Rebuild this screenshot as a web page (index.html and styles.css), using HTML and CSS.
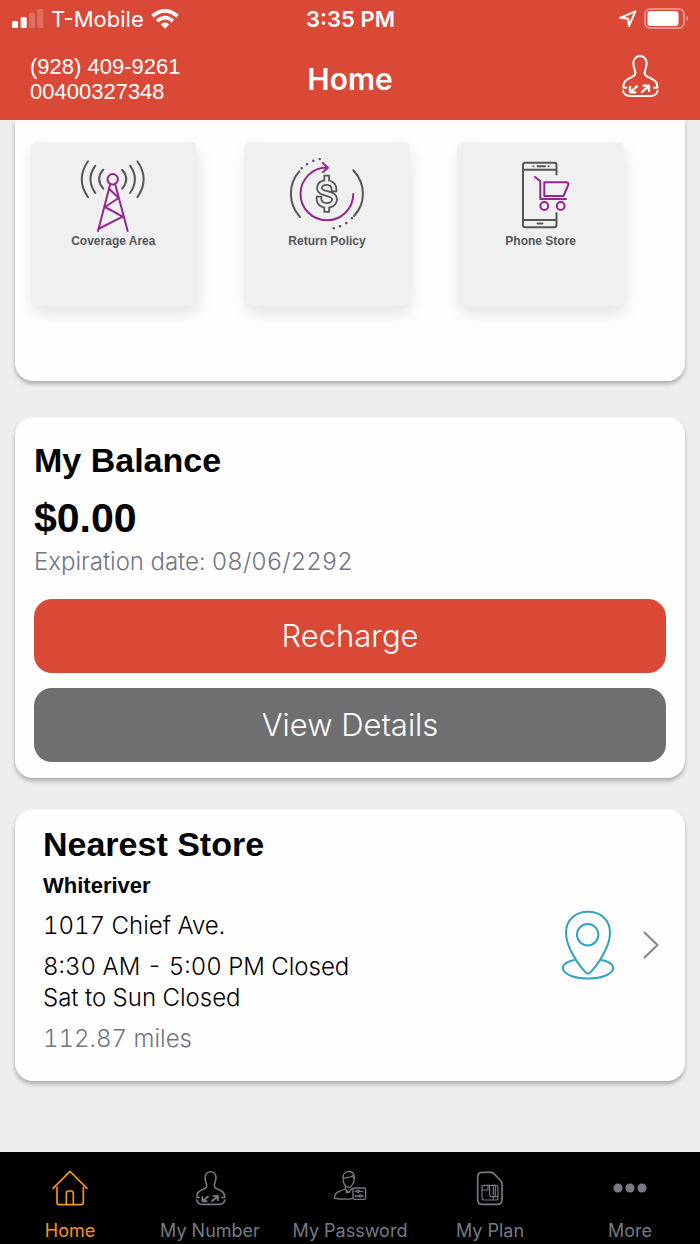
FILE: index.html
```html
<!DOCTYPE html>
<html lang="en">
<head>
<meta charset="utf-8">
<meta name="viewport" content="width=device-width, initial-scale=1">
<title>Home</title>
<link rel="stylesheet" href="styles.css">
</head>
<body>
<header class="header">
  <div class="status">
    <div class="carrier">
      <svg width="32" height="20" viewBox="12 9 32 20" fill="#fff" aria-hidden="true"><rect x="12" y="21" width="6" height="7" rx="1.5"/><rect x="20.700" y="17" width="6" height="11" rx="1.500"/><g opacity=".2"><rect x="29" y="12.500" width="6" height="15.500" rx="1.500"/><rect x="37.300" y="9" width="6" height="19" rx="1.500"/></g></svg>
      <span>T-Mobile</span>
      <svg width="28" height="20" viewBox="0 0 28 20" fill="none" stroke="#fff" stroke-width="3.800" aria-hidden="true"><path d="M1.500 7.200Q14-3.400 26.500 7.200"/><path d="M6 12Q14 5.200 22 12"/><path d="M14 19.800l-4.400-4.500q4.400-3.400 8.800 0z" fill="#fff" stroke="none"/></svg>
    </div>
    <div class="clock">3:35 PM</div>
    <div class="indicators">
      <svg width="18" height="18" viewBox="0 0 18 18" fill="none" stroke="#fff" stroke-width="2" stroke-linejoin="round" aria-hidden="true"><path d="M1.200 7.800L16.400 1.300L9.900 16L9.200 8.800Z"/></svg>
      <svg width="45" height="22" viewBox="0 0 45 22" aria-hidden="true"><rect x="1" y="1" width="39" height="19" rx="5" fill="none" stroke="#fff" stroke-width="1.500" opacity=".5"/><rect x="3.500" y="3" width="31" height="15" rx="3" fill="#fff"/><path d="M42.500 7.500q3 3 0 6z" fill="#fff" opacity=".5"/></svg>
    </div>
  </div>
  <div class="nav">
    <div class="account">(928) 409-9261<br>00400327348</div>
    <h1 class="title">Home</h1>
    <button class="switch" type="button" aria-label="Switch number">
      <svg width="38" height="44" viewBox="33 25 114 130" class="line" stroke-width="6"><path d="M49 125H40C38 96 66 99 75 86C80 76 70 70 70 52C70 23 110 23 110 52C110 70 100 76 105 86C114 99 144 96 142 125H132M39 134C41 145 48 150 60 150H122C134 150 141 145 143 134"/><path stroke-width="7" d="M81 121L62 138M60 123V139H76M96 138L115 121M101 119H117V135"/></svg>
    </button>
  </div>
</header>

<main class="content">
  <section class="card tiles">
    <a class="tile" href="#coverage">
      <svg width="80" height="76" viewBox="73 158 80 76" class="line gray" stroke-width="2"><path d="M103.300 169.700Q95 179.200 103.300 188.700M95.300 165.700Q85.700 179.300 95.300 193M88 161.300Q75.500 179.300 88 197.300M122.100 169.700Q130.400 179.200 122.100 188.700M130.100 165.700Q139.700 179.300 130.100 193M137.400 161.300Q149.900 179.300 137.400 197.300"/><g class="purple"><circle cx="112.700" cy="179.300" r="5.200"/><path d="M110 185L98 231M115.400 185L127.700 231M109.300 189L118.700 198L105 207L122.700 216.700L98.300 229"/></g></svg>
      <span>Coverage Area</span>
    </a>
    <a class="tile" href="#returns">
      <svg width="80" height="76" viewBox="287 158 80 76" class="line gray" stroke-width="2"><path d="M299.300 171.300C288 184 288 204 300 217M353.300 170.300C366 184 366 203 354 216"/><path class="dots" stroke-width="2.600" d="M301.700 168.300h0M307 164.300h0M313.300 160.700h0M319.700 159h0M333.700 228.300h0M340 226.300h0M346.300 223h0M352 218.300h0"/><path stroke-width="6.500" d="M326.700 178V182M326.700 206V209.500M334 189C334 180.500 319.500 180.500 319.500 188C319.500 195.500 334.500 191.500 334.500 199.500C334.500 207.500 319 207.500 319 199" stroke-linecap="square"/><path class="cut" stroke-width="3" d="M326.700 178V182M326.700 206V209.500M334 189C334 180.500 319.500 180.500 319.500 188C319.500 195.500 334.500 191.500 334.500 199.500C334.500 207.500 319 207.500 319 199" stroke-linecap="square"/><path class="purple" d="M353.300 194A26.400 26.400 0 1 1 327.500 167.500M322.700 163L328 167.700L323 172"/></svg>
      <span>Return Policy</span>
    </a>
    <a class="tile" href="#phones">
      <svg width="80" height="76" viewBox="500 158 80 76" class="line gray" stroke-width="2"><path d="M555.500 174.500V165Q555.500 162.800 553.500 162.800H524.200Q522 162.800 522 165V225Q522 227.200 524.200 227.200H553.500Q555.500 227.200 555.500 225V213M522 169.700H555.500M522 220H555.500M536.500 166.300H544M532.300 166.300h0M547.500 166.300h0M536.500 223.600H541.500"/><g class="purple"><path d="M534 177L539.300 181.300V199H565M543.300 182.300H565.500Q568 182.300 567.200 185L562.500 196H543.300Z"/><circle cx="543.300" cy="206" r="3.900"/><circle cx="559.700" cy="206" r="3.900"/></g></svg>
      <span>Phone Store</span>
    </a>
  </section>

  <section class="card balance">
    <h2 class="heading">My Balance</h2>
    <p class="amount">$0.00</p>
    <p class="light muted">Expiration date: 08/06/2292</p>
    <div class="actions">
      <button class="btn primary" type="button">Recharge</button>
      <button class="btn" type="button">View Details</button>
    </div>
  </section>

  <a class="card store" href="#store">
    <div class="details">
      <h2 class="heading">Nearest Store</h2>
      <h3 class="name">Whiteriver</h3>
      <p class="light">1017 Chief Ave.</p>
      <p class="light">8:30 AM - 5:00 PM Closed<br>Sat to Sun Closed</p>
      <p class="light muted">112.87 miles</p>
    </div>
    <svg width="52" height="70" viewBox="561 909 52 70" class="line pin" stroke-width="2" aria-hidden="true"><circle cx="586.700" cy="933.700" r="10.700"/><path d="M585 971.800C578 965 565 946 565 932C565 918 575 910.800 587 910.800S609 918 609 932C609 946 596 965 589 971.800Q587 973.500 585 971.800ZM573.500 959C553 963 561 977.600 587 977.600S621 963 600.500 959"/></svg>
    <svg width="16" height="28" viewBox="0 0 16 28" class="line chevron" stroke-width="2" aria-hidden="true"><path d="M1.500 1.500L14.500 14L1.500 26.500"/></svg>
  </a>
</main>

<nav class="tabs">
  <a class="tab active" href="#home" aria-current="page">
    <svg width="36" height="36" viewBox="159 60 108 108" class="line" stroke-width="5"><path d="M162 115L213 64L264 115M174 112V157Q174 164 181 164H246Q253 164 253 157V112M202 162V130Q202 123 209 123H216Q223 123 223 130V162"/></svg>
    <span>Home</span>
  </a>
  <a class="tab" href="#number">
    <svg width="31" height="36" viewBox="33 25 114 130" class="line" stroke-width="6"><path d="M49 125H40C38 96 66 99 75 86C80 76 70 70 70 52C70 23 110 23 110 52C110 70 100 76 105 86C114 99 144 96 142 125H132M39 134C41 145 48 150 60 150H122C134 150 141 145 143 134"/><path stroke-width="7" d="M81 121L62 138M60 123V139H76M96 138L115 121M101 119H117V135"/></svg>
    <span>My Number</span>
  </a>
  <a class="tab" href="#password">
    <svg width="36" height="36" viewBox="21 30 108 108" class="line" stroke-width="4"><path d="M54 53C53 30 87 28 88 50C89 66 82 80 71 83C58 80 54 66 54 53ZM54 55C64 53 78 53 83 47L87 55M61 79V87L45 93C33 97 28 104 28 114Q52 120 82 116M61 87L71 98L82 84M64 92V98L71 98"/><rect x="84" y="84" width="38" height="34" rx="6"/><path d="M90 94H95M103 94H113M90 108H101M110 108H115"/><circle cx="99" cy="94" r="3.500"/><circle cx="106" cy="108" r="3.500"/></svg>
    <span>My Password</span>
  </a>
  <a class="tab" href="#plan">
    <svg width="36" height="36" viewBox="368 62 108 108" class="line" stroke-width="5"><path d="M399 69H425Q430 69 433 72L455 95Q458 98 458 103V151Q458 165 444 165H399Q385 165 385 151V83Q385 69 399 69Z"/><path stroke-width="3.500" d="M404 108H440Q446 108 446 114V146Q446 152 440 152H404Q398 152 398 146V114Q398 108 404 108ZM398 122H416V108M421 108V136Q421 142 427 142H446M432 108V136M438 108V142M432 142V152"/></svg>
    <span>My Plan</span>
  </a>
  <a class="tab" href="#more">
    <svg width="36" height="36" viewBox="0 0 36 36" fill="currentColor"><circle cx="6" cy="18" r="4.600"/><circle cx="18" cy="18" r="4.600"/><circle cx="30" cy="18" r="4.600"/></svg>
    <span>More</span>
  </a>
</nav>
</body>
</html>
```

FILE: styles.css
```css
* { box-sizing: border-box; }

body {
  margin: 0;
  min-height: 100vh;
  display: flex;
  flex-direction: column;
  background: #eee;
  color: #000;
  font-family: "Liberation Sans", Arial, sans-serif;
}

h1, h2, h3, p { margin: 0; }
a { color: inherit; text-decoration: none; }
button { border: 0; padding: 0; color: inherit; cursor: pointer; }

.line {
  fill: none;
  stroke: currentColor;
  stroke-linecap: round;
  stroke-linejoin: round;
}

.header {
  background: #da4936;
  color: #fff;
}

.status, .nav {
  display: grid;
  grid-template-columns: 1fr auto 1fr;
  align-items: center;
}

.status {
  height: 38px;
  padding: 0 11px 0 12px;
  font: 400 22px/38px Inter, sans-serif;
}

.carrier, .indicators {
  display: flex;
  align-items: center;
  gap: 7px;
}

.indicators { justify-content: flex-end; }
.clock { font-weight: 600; }

.nav {
  height: 82px;
  padding: 0 30px;
}

.account { font-size: 22px; line-height: 25px; }
.title { font: 600 30px/36px Inter, sans-serif; }

.switch {
  justify-self: end;
  margin: 0 11px 6px 0;
  background: none;
}

.switch svg { display: block; }

.content {
  flex: 1;
  display: flex;
  flex-direction: column;
  padding: 0 15px 30px;
}

.card {
  background: #fefefe;
  border-radius: 18px;
  box-shadow: 0 3px 4px rgba(0, 0, 0, .28);
}

.tiles {
  display: grid;
  grid-template-columns: repeat(3, 1fr);
  gap: 47px;
  padding: 22px 61px 75px 15px;
  border-radius: 0 0 18px 18px;
}

.tile {
  display: flex;
  flex-direction: column;
  align-items: center;
  min-height: 164px;
  padding-top: 16px;
  background: #f0f0f0;
  border-radius: 6px;
  box-shadow: 2px 8px 16px rgba(0, 0, 0, .1);
  color: #55565a;
  font-size: 12px;
  font-weight: 700;
  line-height: 14px;
}

.purple { stroke: #92278f; }
.cut { stroke: #f0f0f0; }

.balance {
  margin-top: 36px;
  padding: 23px 19px 16px;
}

.heading { font-size: 34px; line-height: 40px; }

.amount {
  margin-top: 16px;
  font-size: 41px;
  font-weight: 700;
  line-height: 44px;
}

.light {
  font: 300 24px/31px Inter, sans-serif;
  font-variant-numeric: tabular-nums;
}

.balance .light { margin-top: 6px; }
.muted { color: #737482; }

.actions {
  display: grid;
  gap: 15px;
  margin-top: 22px;
}

.btn {
  height: 74px;
  border-radius: 18px;
  background: #6e6f71;
  color: #fff;
  font: 300 31px/40px Inter, sans-serif;
}

.primary { background: #da4936; }

.store {
  display: flex;
  align-items: center;
  margin-top: 31px;
  padding: 15px 26px 15px 28px;
}

.details { flex: 1; padding-bottom: 12px; }
.name { margin: 9px 0 11px; font-size: 22px; line-height: 26px; }
.store .light + .light { margin-top: 10px; }
.pin { color: #2ea3c0; }
.chevron { margin-left: 29px; color: #858585; }

.tabs {
  display: grid;
  grid-template-columns: repeat(5, 1fr);
  padding: 18px 0 1px;
  background: #000;
  color: #777986;
}

.tab {
  display: flex;
  flex-direction: column;
  align-items: center;
  gap: 13px;
  font: 400 18px/24px Inter, sans-serif;
}

.active { color: #f7941e; }
```
